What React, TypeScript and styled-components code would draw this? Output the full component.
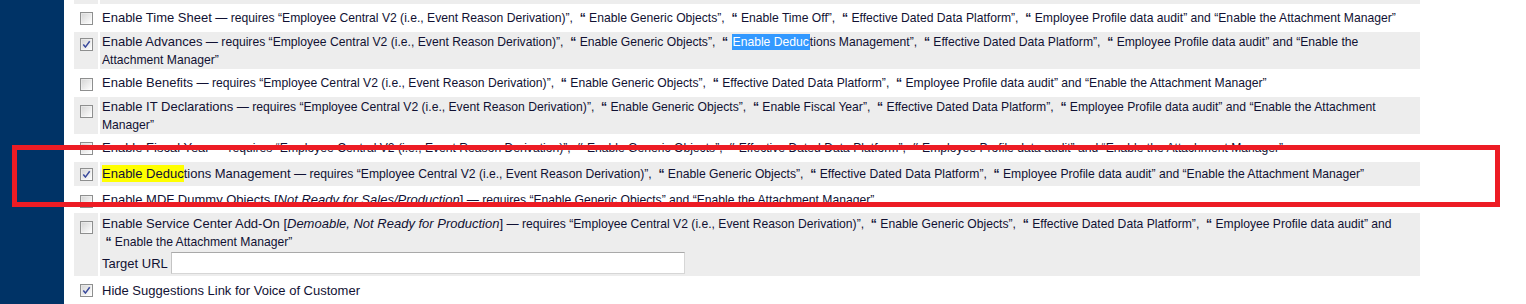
import React from 'react';
import styled, { createGlobalStyle } from 'styled-components';

const Global = createGlobalStyle`
  html, body { margin: 0; padding: 0; background: #ffffff; }
  body {
    width: 1526px;
    height: 304px;
    overflow: hidden;
    font-family: "Liberation Sans", Arial, sans-serif;
  }
`;

const Page = styled.div`
  display: flex;
  height: 304px;
  position: relative;
  overflow: hidden;
`;

const Sidebar = styled.div`
  width: 64px;
  flex: none;
  background: #003366;
`;

const Content = styled.div`
  padding-left: 10px;
  display: flex;
  flex-direction: column;
`;

const Row = styled.div<{ $h: number }>`
  display: grid;
  grid-template-columns: 24px 1320px;
  column-gap: 2px;
  height: ${(p) => p.$h}px;
`;

const CheckCell = styled.div<{ $shaded?: boolean; $top: number }>`
  background: ${(p) => (p.$shaded ? '#ededed' : 'transparent')};
  padding-top: ${(p) => p.$top}px;
  padding-left: 6px;
  box-sizing: border-box;
`;

const TextCell = styled.div<{ $shaded?: boolean }>`
  background: ${(p) => (p.$shaded ? '#ededed' : 'transparent')};
  padding: 0 2px;
  display: flex;
  flex-direction: column;
  justify-content: center;
  font-size: 13px;
  line-height: 17px;
  color: #111133;
  overflow: hidden;
`;

const Line = styled.span`
  display: block;
  white-space: pre;
`;

const Desc = styled.span`
  font-size: 12.15px;
`;

const Q = styled.span`
  font-weight: bold;
`;

const Em = styled.i`
  font-style: italic;
`;

const Mark = styled.span`
  display: inline-block;
  height: 17px;
  background: #ffff00;
`;

const Selection = styled.span`
  display: inline-block;
  height: 16px;
  line-height: 16px;
  padding: 0 1px;
  background: #3399ff;
  color: #ffffff;
`;

const Box = styled.span`
  display: block;
  position: relative;
  width: 13px;
  height: 13px;
  box-sizing: border-box;
  border: 1px solid #8e8f8f;
  background: linear-gradient(135deg, #d4d4d4 0%, #ececec 55%, #ffffff 100%);
  box-shadow: inset 0 0 0 1px rgba(255, 255, 255, 0.35);
  svg {
    position: absolute;
    left: 0;
    top: 0;
  }
`;

const InputRow = styled.div`
  display: flex;
  align-items: center;
  gap: 3px;
  margin-top: 1px;
  height: 22px;
`;

const UrlInput = styled.input`
  width: 514px;
  height: 22px;
  box-sizing: border-box;
  margin: 0;
  padding: 0 3px;
  border: 1px solid #d6d6d6;
  border-top-color: #a9a9a9;
  border-left-color: #c4c4c4;
  background: #ffffff;
  font-family: "Liberation Sans", Arial, sans-serif;
  font-size: 13px;
`;

const Annotation = styled.div`
  position: absolute;
  left: 12px;
  top: 145px;
  width: 1488px;
  height: 62px;
  box-sizing: border-box;
  border: 5px solid #ed1c24;
  pointer-events: none;
`;

const CheckBox = ({ checked }: { checked?: boolean }) => (
  <Box>
    {checked && (
      <svg width="11" height="11" viewBox="0 0 11 11">
        <path d="M2.3 5.6 L4.4 8.1 L8.7 2.3" fill="none" stroke="#3a4a9c" strokeWidth="1.5" strokeLinejoin="round" />
      </svg>
    )}
  </Box>
);

type RowDef = {
  h: number;
  top: number;
  shaded?: boolean;
  checked?: boolean;
  noBox?: boolean;
  content?: React.ReactNode;
};

const sep = (label: React.ReactNode) => (
  <>
    {'”,  '}
    <Q>“</Q> {label}
  </>
);

const EC = '“Employee Central V2 (i.e., Event Reason Derivation)';

const rows: RowDef[] = [
  { h: 4, top: 0, shaded: true, noBox: true },
  {
    h: 28,
    top: 8,
    content: (
      <Line>
        Enable Time Sheet
        <Desc>
          {' — requires '}
          {EC}
          {sep('Enable Generic Objects')}
          {sep('Enable Time Off')}
          {sep('Effective Dated Data Platform')}
          {sep('Employee Profile data audit')}
          {'” and “Enable the Attachment Manager”'}
        </Desc>
      </Line>
    ),
  },
  {
    h: 37,
    top: 6,
    shaded: true,
    checked: true,
    content: (
      <>
        <Line>
          Enable Advances
          <Desc>
            {' — requires '}
            {EC}
            {sep('Enable Generic Objects')}
            {sep(
              <>
                <Selection>Enable Deduc</Selection>tions Management
              </>
            )}
            {sep('Effective Dated Data Platform')}
            {sep('Employee Profile data audit')}
            {'” and “Enable the'}
          </Desc>
        </Line>
        <Line>
          <Desc>Attachment Manager”</Desc>
        </Line>
      </>
    ),
  },
  {
    h: 28,
    top: 9,
    content: (
      <Line>
        Enable Benefits
        <Desc>
          {' — requires '}
          {EC}
          {sep('Enable Generic Objects')}
          {sep('Effective Dated Data Platform')}
          {sep('Employee Profile data audit')}
          {'” and “Enable the Attachment Manager”'}
        </Desc>
      </Line>
    ),
  },
  {
    h: 37,
    top: 8,
    shaded: true,
    content: (
      <>
        <Line>
          Enable IT Declarations
          <Desc>
            {' — requires '}
            {EC}
            {sep('Enable Generic Objects')}
            {sep('Enable Fiscal Year')}
            {sep('Effective Dated Data Platform')}
            {sep('Employee Profile data audit')}
            {'” and “Enable the Attachment'}
          </Desc>
        </Line>
        <Line>
          <Desc>Manager”</Desc>
        </Line>
      </>
    ),
  },
  {
    h: 28,
    top: 8,
    content: (
      <Line>
        Enable Fiscal Year
        <Desc>
          {' — requires '}
          {EC}
          {sep('Enable Generic Objects')}
          {sep('Effective Dated Data Platform')}
          {sep('Employee Profile data audit')}
          {'” and “Enable the Attachment Manager”'}
        </Desc>
      </Line>
    ),
  },
  {
    h: 24,
    top: 6,
    shaded: true,
    checked: true,
    content: (
      <Line>
        <Mark>Enable Deduc</Mark>tions Management
        <Desc>
          {' — requires '}
          {EC}
          {sep('Enable Generic Objects')}
          {sep('Effective Dated Data Platform')}
          {sep('Employee Profile data audit')}
          {'” and “Enable the Attachment Manager”'}
        </Desc>
      </Line>
    ),
  },
  {
    h: 27,
    top: 9,
    content: (
      <Line>
        Enable MDF Dummy Objects [<Em>Not Ready for Sales/Production</Em>]
        <Desc>{' — requires “Enable Generic Objects” and “Enable the Attachment Manager”'}</Desc>
      </Line>
    ),
  },
  {
    h: 63,
    top: 8,
    shaded: true,
    content: (
      <>
        <Line>
          Enable Service Center Add-On [<Em>Demoable, Not Ready for Production</Em>]
          <Desc>
            {' — requires '}
            {EC}
            {sep('Enable Generic Objects')}
            {sep('Effective Dated Data Platform')}
            {sep('Employee Profile data audit')}
            {'” and'}
          </Desc>
        </Line>
        <Line>
          <Desc>
            {' '}
            <Q>“</Q> Enable the Attachment Manager”
          </Desc>
        </Line>
        <InputRow>
          <span>Target URL</span>
          <UrlInput type="text" defaultValue="" />
        </InputRow>
      </>
    ),
  },
  {
    h: 28,
    top: 8,
    checked: true,
    content: <Line>Hide Suggestions Link for Voice of Customer</Line>,
  },
];

export default function App() {
  return (
    <>
      <Global />
      <Page>
        <Sidebar />
        <Content>
          {rows.map((r, i) => (
            <Row key={i} $h={r.h}>
              <CheckCell $shaded={r.shaded} $top={r.top}>
                {!r.noBox && <CheckBox checked={r.checked} />}
              </CheckCell>
              <TextCell $shaded={r.shaded}>{r.content}</TextCell>
            </Row>
          ))}
        </Content>
        <Annotation />
      </Page>
    </>
  );
}
